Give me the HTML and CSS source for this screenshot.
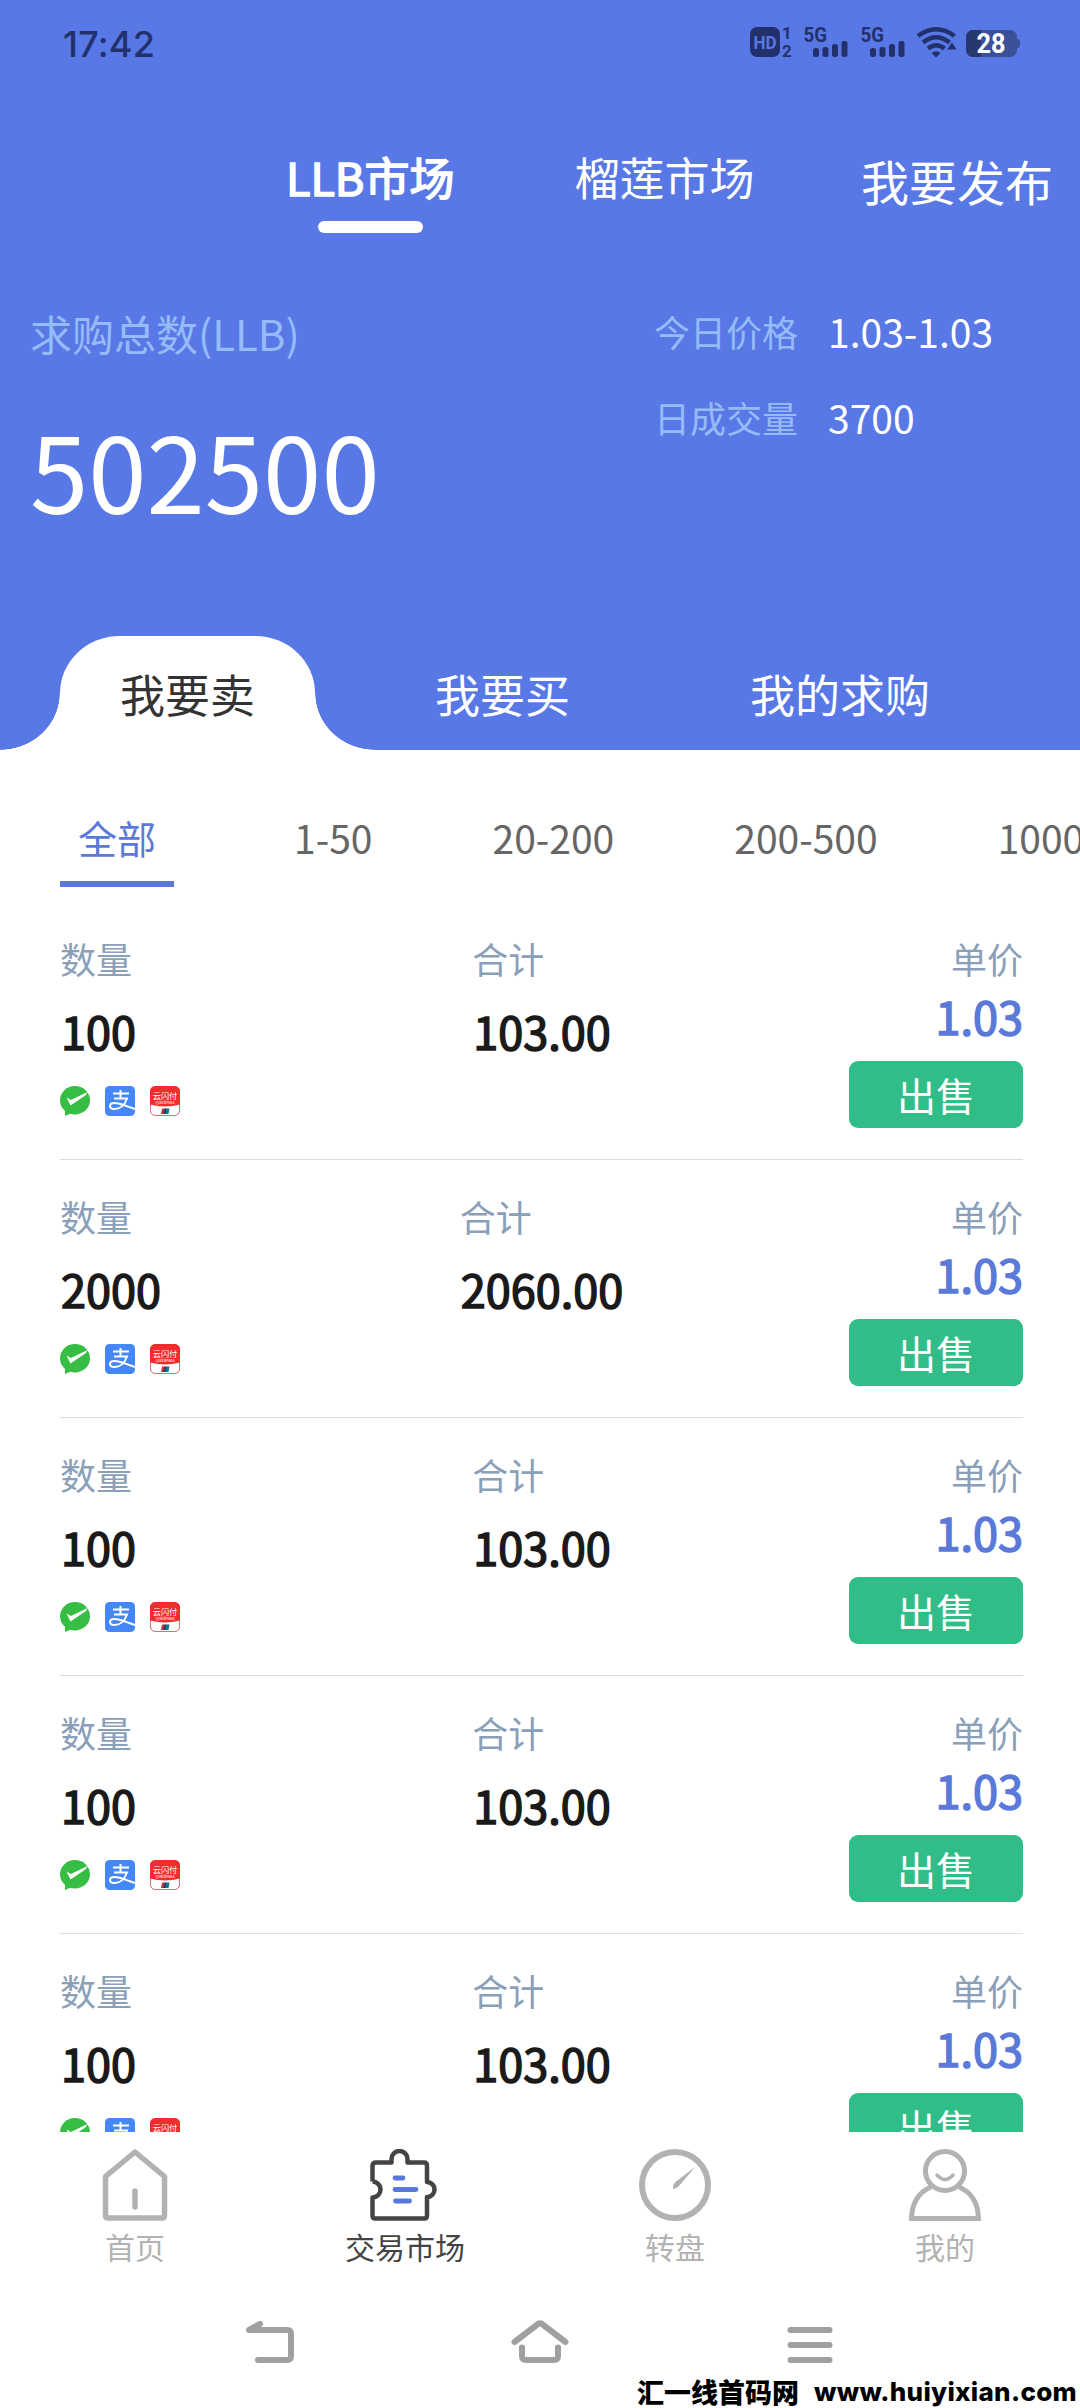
FILE: index.html
```
<!DOCTYPE html>
<html lang="zh-CN">
<head>
    <meta charset="UTF-8">
    <meta name="viewport" content="width=device-width, initial-scale=1.0">
    <title>交易市场</title>
    <link rel="stylesheet" href="styles.css">
</head>
<body>
    <div class="header">
        <div class="status-bar">
            <span class="time">17:42</span>
            <svg class="status-icons" width="272" height="32" viewBox="0 0 272 32">
                <rect x="0" y="1" width="30" height="30" rx="7"/>
                <text class="hd" x="3.500" y="23" textLength="23" lengthAdjust="spacingAndGlyphs">HD</text>
                <text class="st" x="37" y="13" text-anchor="middle">1</text>
                <text class="st" x="37" y="31" text-anchor="middle">2</text>
                <text class="net" x="53.500" y="16" textLength="23.500" lengthAdjust="spacingAndGlyphs">5G</text>
                <g id="bars">
                    <rect x="63" y="22" width="6" height="9" rx="2.500"/>
                    <rect x="72.500" y="21" width="6" height="10" rx="2.500"/>
                    <rect x="82" y="18" width="6" height="13" rx="2.500"/>
                    <rect x="91.500" y="15" width="6" height="16" rx="2.500"/>
                </g>
                <text class="net" x="110.500" y="16" textLength="23.500" lengthAdjust="spacingAndGlyphs">5G</text>
                <use href="#bars" x="57"/>
                <g class="wifi">
                    <path d="M168 10q18-13.500 36.500 0"/>
                    <path d="M173 16.500q13-10.500 26.500 0"/>
                    <path d="M178 22.500q8-6.500 16.500 0"/>
                </g>
                <path d="M181.500 27q4.500-3.500 9 0l-4.500 4.500zM197 23.500l5-7 4.500 7z"/>
                <rect x="216" y="4" width="51" height="27" rx="7" fill="#3b5099"/>
                <path d="M223 4h8v27h-8a7 7 0 0 1-7-7V11a7 7 0 0 1 7-7z" fill="#28376e"/>
                <path d="M267 13q3 0 3 2.500v4q0 2.500-3 2.500z" fill="#3b5099"/>
                <text class="bat" x="226.500" y="27" textLength="29" lengthAdjust="spacingAndGlyphs">28</text>
            </svg>
        </div>

        <div class="market-nav">
            <div class="market active">LLB市场</div>
            <div class="market">榴莲市场</div>
            <div class="publish">我要发布</div>
        </div>

        <div class="summary">
            <div class="total">
                <div class="total-label">求购总数(LLB)</div>
                <div class="total-num">502500</div>
            </div>
            <div class="today">
                <div class="today-row"><span>今日价格</span><b>1.03-1.03</b></div>
                <div class="today-row"><span>日成交量</span><b>3700</b></div>
            </div>
        </div>

        <div class="type-tabs">
            <div class="type active">我要卖</div>
            <div class="type">我要买</div>
            <div class="type">我的求购</div>
        </div>
    </div>

    <div class="filters">
        <div class="filter active">全部</div>
        <div class="filter">1-50</div>
        <div class="filter">20-200</div>
        <div class="filter">200-500</div>
        <div class="filter">1000</div>
    </div>

    <div class="list" id="list"></div>

    <div class="tab-bar">
        <div class="tab">
            <svg width="72" height="72" viewBox="0 0 72 72" fill="none" stroke="#b2b2b2" stroke-width="5.500" stroke-linejoin="round" stroke-linecap="round">
                <path d="M6.500 27.500L36 3l29.500 24.500V66.500q0 2.500-2.500 2.500H9q-2.500 0-2.500-2.500zM36 42v16"/>
            </svg>
            <span>首页</span>
        </div>
        <div class="tab active">
            <svg width="72" height="72" viewBox="0 0 72 72" fill="none" stroke-linejoin="round">
                <path stroke="#444" stroke-width="4.500" d="M3.500 32.500V17q0-3.500 3.500-3.500H22.500V10a8 8 0 0 1 16 0v3.500H55q3 0 3 3.500V33a7.500 7.500 0 1 1 0 15V66.500q0 3-3 3H6.500q-3 0-3-3V48.500a8 8 0 1 0 0-16"/>
                <path stroke="#5a78dc" stroke-width="4.800" stroke-linecap="round" d="M26 29h8M26 40.500h21M26.500 52h14"/>
            </svg>
            <span>交易市场</span>
        </div>
        <div class="tab">
            <svg width="72" height="72" viewBox="0 0 72 72">
                <circle cx="36" cy="36" r="33" fill="none" stroke="#b2b2b2" stroke-width="6"/>
                <path fill="#b2b2b2" d="M56 18L40 37q-3 3-6 3-.5-4 2.500-7z"/>
            </svg>
            <span>转盘</span>
        </div>
        <div class="tab">
            <svg width="72" height="72" viewBox="0 0 72 72" fill="none" stroke="#b2b2b2" stroke-width="5">
                <circle cx="36" cy="22" r="19.500"/>
                <path d="M22 38C10 43 3 53 2.500 69.500h67C69 53 62 43 50 38"/>
                <path stroke-width="3.500" stroke-linecap="round" d="M28 26q8 9 16 0"/>
            </svg>
            <span>我的</span>
        </div>
    </div>

    <div class="sys-nav">
        <svg width="60" height="60" viewBox="0 0 60 60">
            <path d="M20 12L9 18h38q4 0 4 4v22q0 4-4 4H18"/>
        </svg>
        <svg width="60" height="60" viewBox="0 0 60 60">
            <path d="M4.500 30L28 12q2-1.500 4 0L55.500 30M12 35.500v8.500q0 4 4 4h28q4 0 4-4v-8.500"/>
        </svg>
        <svg width="60" height="60" viewBox="0 0 60 60">
            <path d="M10.500 18h39M10.500 33h39M10.500 48h39"/>
        </svg>
    </div>

    <div class="watermark"><span>汇一线首码网</span><span>www.huiyixian.com</span></div>

    <script>
        const orders = [
            { num: '100', total: '103.00', price: '1.03' },
            { num: '2000', total: '2060.00', price: '1.03' },
            { num: '100', total: '103.00', price: '1.03' },
            { num: '100', total: '103.00', price: '1.03' },
            { num: '100', total: '103.00', price: '1.03' }
        ];

        // 支付方式图标: 微信 / 支付宝 / 云闪付
        const payIcons = `
            <svg viewBox="0 0 30 30">
                <ellipse cx="15" cy="14.200" rx="15" ry="14.200" fill="#36bd44"/>
                <path fill="#36bd44" d="M5 23v7l7-3z"/>
                <path fill="#fff" d="M6.500 11.500l4.500 2.500L27.500 6l-1.500 3L10.500 19.500z"/>
            </svg>
            <svg viewBox="0 0 30 30">
                <rect width="30" height="30" rx="4.500" fill="#4487f8"/>
                <path fill="none" stroke="#fff" stroke-width="2" d="M8 7.500h16M15.500 4v8.500M9 12.500h13C19.500 20 14 23 9.500 23c-6 0-6-6 0-6 6 0 12 3.500 20.500 6"/>
            </svg>
            <svg viewBox="0 0 30 30">
                <rect x=".4" y=".4" width="29.200" height="29.200" rx="5" fill="#fff" stroke="#c33a40" stroke-width=".8"/>
                <path fill="#f02c2c" d="M5.500 0h19A5.500 5.500 0 0 1 30 5.500V18.500q-15 4-30 0V5.500A5.500 5.500 0 0 1 5.500 0z"/>
                <text x="15" y="12.800" text-anchor="middle" font-size="8.200">云闪付</text>
                <text x="15" y="18" text-anchor="middle" font-size="4">QuickPass</text>
                <path fill="#c8303c" d="M12 22.500h3l-1 5.500h-3z"/>
                <path fill="#1c3f72" d="M14.500 22.500h2.500l-1 5.500h-2.500z"/>
                <path fill="#0c7a83" d="M16.500 22.500h3l-1 5.500h-3z"/>
            </svg>`;

        document.getElementById('list').innerHTML = orders.map(o => `
            <div class="order">
                <div class="col">
                    <div class="label">数量</div>
                    <div class="value">${o.num}</div>
                    <div class="pays">${payIcons}</div>
                </div>
                <div class="col-total">
                    <div class="label">合计</div>
                    <div class="value">${o.total}</div>
                </div>
                <div class="col right">
                    <div class="label">单价</div>
                    <div class="price">${o.price}</div>
                    <div class="sell">出售</div>
                </div>
            </div>`).join('');
    </script>
</body>
</html>
```
FILE: styles.css
```
* { box-sizing: border-box; }
body { margin: 0; width: 1080px; height: 2408px; overflow: hidden; display: flex; flex-direction: column; position: relative; background: #fff; font-family: "Noto Sans CJK SC", sans-serif; white-space: nowrap; }

/* 头部 */
.header { height: 750px; flex: none; background: #5878e6; color: #fff; display: flex; flex-direction: column; }
.status-bar { height: 88px; padding: 0 58px 0 63px; display: flex; justify-content: space-between; align-items: center; color: #22306b; }
.time { font: 500 36px Inter, sans-serif; letter-spacing: 0.2px; }
.status-icons { fill: #22306b; font-family: Roboto, sans-serif; font-weight: 700; margin-top: -4px; }
.status-icons .hd { font-size: 19px; fill: #5878e6; }
.status-icons .st { font-size: 17px; }
.status-icons .net { font-size: 21px; }
.status-icons .bat { font-size: 27px; fill: #fff; }
.wifi path { fill: none; stroke: #22306b; stroke-width: 4.5; }

.market-nav { height: 145px; display: flex; padding: 56px 27px 0 286px; font-size: 45px; line-height: 66px; }
.market { margin-right: 120px; }
.market.active { -webkit-text-stroke: 1.6px #fff; }
.market.active::after { content: ""; display: block; width: 105px; height: 12px; margin: 11px auto 0; border-radius: 6px; background: #fff; }
.publish { margin-left: auto; font-size: 48px; line-height: 72px; }
.market:nth-child(2) { margin-right: 0; }

.summary { height: 403px; display: flex; justify-content: space-between; padding: 70px 0 0 30px; }
.total-label { font-size: 42px; line-height: 60px; color: #95bbf8; }
.total-num { font-size: 105px; line-height: 152px; margin-top: 29px; }
.today { width: 426px; }
.today-row { height: 86px; line-height: 56px; display: flex; }
.today-row span { width: 174px; font-size: 36px; color: #95bbf8; }
.today-row b { font-size: 39px; font-weight: 400; }

.type-tabs { height: 114px; display: flex; gap: 60px; padding-left: 60px; font-size: 45px; line-height: 116px; }
.type { padding: 0 60px; }
.type.active { position: relative; background: #fff; color: #333; border-radius: 60px 60px 0 0 / 57px 57px 0 0; }
/* 选中标签两侧的反向圆角 */
.type.active::before,
.type.active::after { content: ""; position: absolute; bottom: 0; width: 60px; height: 57px; }
.type.active::before { left: -60px; background: radial-gradient(60px 57px at 0 0, #5878e6 99%, #fff 100%); }
.type.active::after { right: -60px; background: radial-gradient(60px 57px at 100% 0, #5878e6 99%, #fff 100%); }

/* 筛选 */
.filters { height: 152px; flex: none; display: flex; gap: 120px; padding: 50px 0 0 60px; font-size: 39px; color: #666; line-height: 74px; overflow: hidden; }
.filter { flex: none; height: 87px; }
.filter.active { padding: 0 18px; color: #5a79d9; border-bottom: 6px solid #5a79d9; }

/* 列表 */
.list { height: 1230px; flex: none; overflow: hidden; padding: 0 57px 0 60px; }
.order { height: 258px; display: flex; justify-content: space-between; border-bottom: 1px solid #dcdcdc; padding-top: 29px; }
.col { width: 174px; }
.label { font-size: 36px; line-height: 54px; color: #8aa0b9; }
.value { font-size: 45px; line-height: 66px; margin-top: 13px; padding-left: 1px; color: #1a1a1a; -webkit-text-stroke: 1.5px #1a1a1a; }
.pays { display: flex; gap: 15px; margin-top: 22px; }
.pays svg { width: 30px; height: 30px; fill: #fff; }
.right { text-align: right; }
.price { font-size: 45px; line-height: 62px; color: #5a79d9; -webkit-text-stroke: 1.5px #5a79d9; }
.sell { height: 67px; margin-top: 14px; border-radius: 9px; background: #30bd88; color: #fff; font-size: 39px; line-height: 66px; text-align: center; }

/* 底部 */
.tab-bar { height: 148px; flex: none; display: flex; background: #fff; padding-top: 17px; }
.tab { width: 270px; display: flex; flex-direction: column; align-items: center; font-size: 30px; line-height: 44px; color: #b2b2b2; }
.tab span { margin-top: 3px; }
.tab.active { color: #444; }
.sys-nav { display: flex; justify-content: center; gap: 210px; padding-top: 32px; }
.sys-nav svg { fill: none; stroke: #a0a0a0; stroke-width: 6; stroke-linecap: round; stroke-linejoin: round; }
.watermark { position: absolute; right: 3px; bottom: 0; display: flex; gap: 15px; color: #000; font-size: 27px; line-height: 32px; font-weight: 900; }
.watermark span:last-child { font-family: Inter, sans-serif; font-size: 26px; font-weight: 800; letter-spacing: 0.3px; }
```
